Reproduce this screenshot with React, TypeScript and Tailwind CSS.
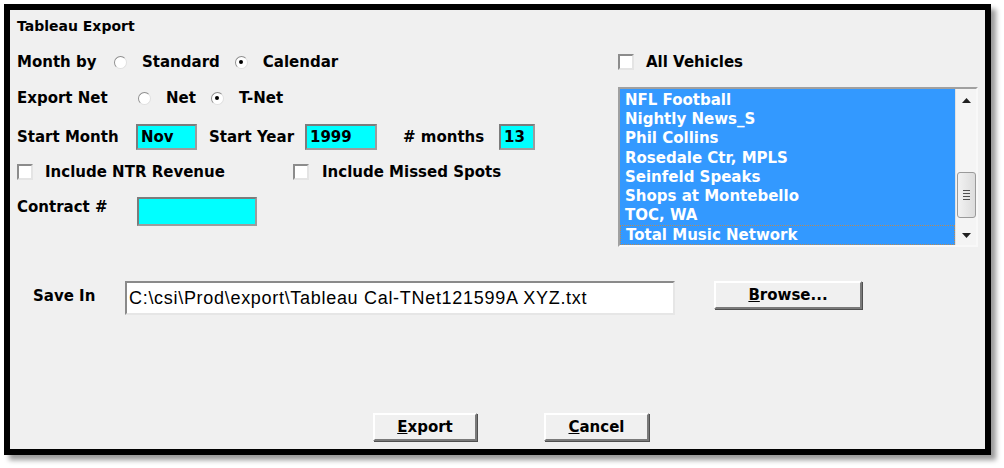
import React from "react";

const font = { fontFamily: '"DejaVu Sans", "Liberation Sans", sans-serif' };

const Radio = ({ checked, label }: { checked?: boolean; label: string }) => (
  <div className="flex items-center">
    <div className="w-[13px] h-[13px] rounded-full border border-t-[#8e8e8e] border-l-[#8e8e8e] border-b-[#e0e0e0] border-r-[#e0e0e0] bg-white flex items-center justify-center">
      {checked && <div className="w-[4px] h-[4px] rounded-full bg-black" />}
    </div>
    <span className="ml-[15px]">{label}</span>
  </div>
);

const Check = () => (
  <div className="w-[16px] h-[16px] bg-white border-2 border-t-[#8c8c8c] border-l-[#8c8c8c] border-b-[#e4e4e4] border-r-[#e4e4e4]" />
);

const CyanBox = ({ w, h, value }: { w: string; h: string; value?: string }) => (
  <div
    className={`${w} ${h} bg-[#00ffff] border-2 border-t-[#7c7c7c] border-l-[#7c7c7c] border-b-[#9c9c9c] border-r-[#9c9c9c] flex items-center pl-[3px]`}
  >
    {value}
  </div>
);

const Button = ({ w, children }: { w: string; children: React.ReactNode }) => (
  <div
    className={`${w} h-[28px] bg-[#f0f0f0] border-2 border-t-white border-l-white border-b-[#7a7a7a] border-r-[#7a7a7a] shadow-[1px_1px_0_#505050] flex items-center justify-center`}
  >
    {children}
  </div>
);

const vehicles = [
  "NFL Football",
  "Nightly News_S",
  "Phil Collins",
  "Rosedale Ctr, MPLS",
  "Seinfeld Speaks",
  "Shops at Montebello",
  "TOC, WA",
  "Total Music Network",
];

export default function App() {
  return (
    <div className="w-[1004px] h-[468px] bg-white pt-[4px] pl-[4px]" style={font}>
      <div className="w-[987px] h-[451px] border-[6px] border-black bg-[#f0f0f0] shadow-[5px_5px_5px_rgba(0,0,0,0.4)] flex flex-col pl-[7px] pt-[8px] text-[15px] font-bold text-black">
        <div className="flex">
          {/* left column */}
          <div className="w-[601px] flex flex-col">
            <div className="h-[16px] leading-[16px] text-[14px]">Tableau Export</div>

            <div className="mt-[16px] h-[24px] flex items-center">
              <span className="w-[97px]">Month by</span>
              <Radio label="Standard" />
              <div className="ml-[15px]">
                <Radio checked label="Calendar" />
              </div>
            </div>

            <div className="mt-[12px] h-[24px] flex items-center">
              <span className="w-[121px]">Export Net</span>
              <Radio label="Net" />
              <div className="ml-[15px]">
                <Radio checked label="T-Net" />
              </div>
            </div>

            <div className="mt-[13px] h-[28px] flex items-center">
              <span className="w-[119px]">Start Month</span>
              <CyanBox w="w-[61px]" h="h-[26px]" value="Nov" />
              <span className="ml-[12px] w-[96px]">Start Year</span>
              <CyanBox w="w-[72px]" h="h-[26px]" value="1999" />
              <span className="ml-[26px] w-[96px]">
                # months
              </span>
              <CyanBox w="w-[36px]" h="h-[26px]" value="13" />
            </div>

            <div className="mt-[11px] h-[20px] flex items-center">
              <div className="w-[276px] flex items-center">
                <Check />
                <span className="ml-[12px]">Include NTR Revenue</span>
              </div>
              <Check />
              <span className="ml-[13px]">Include Missed Spots</span>
            </div>

            <div className="mt-[15px] h-[28px] flex items-start">
              <span className="w-[120px] leading-[18px] mt-[1px]">Contract #</span>
              <CyanBox w="w-[120px]" h="h-[29px]" />
            </div>
          </div>

          {/* right column */}
          <div className="flex flex-col pt-[32px]">
            <div className="h-[24px] flex items-center">
              <Check />
              <span className="ml-[12px]">All Vehicles</span>
            </div>
            <div className="mt-[13px] w-[360px] h-[160px] border-2 border-t-[#a0a0a0] border-l-[#a0a0a0] border-b-[#f8f8f8] border-r-[#f8f8f8] flex">
              <div className="w-[335px] h-full bg-[#3399ff] pt-[2px] text-white">
                {vehicles.map((v, i) => (
                  <div
                    key={v}
                    className={`h-[19.2px] leading-[19px] pl-[5px] ${
                      i === vehicles.length - 1 ? "border border-dotted border-[#b98a55] pl-[4px] leading-[17px]" : ""
                    }`}
                  >
                    {v}
                  </div>
                ))}
              </div>
              <div className="w-[21px] h-full bg-[#f4f4f4] border-l border-[#e2e2e2] flex flex-col items-center">
                <div className="h-[24px] flex items-center justify-center">
                  <svg width="9" height="5" viewBox="0 0 9 5">
                    <path d="M0 5 L4.5 0 L9 5 Z" fill="#202020" />
                  </svg>
                </div>
                <div className="mt-[59px] w-[19px] h-[47px] rounded-[3px] border border-[#9a9a9a] bg-gradient-to-r from-[#f2f2f2] to-[#dcdcdc] flex flex-col items-center justify-center gap-[2px]">
                  <div className="w-[7px] h-[1px] bg-[#505050]" />
                  <div className="w-[7px] h-[1px] bg-[#505050]" />
                  <div className="w-[7px] h-[1px] bg-[#505050]" />
                  <div className="w-[7px] h-[1px] bg-[#505050]" />
                </div>
                <div className="mt-[7px] h-[20px] flex items-center justify-center">
                  <svg width="9" height="5" viewBox="0 0 9 5">
                    <path d="M0 0 L9 0 L4.5 5 Z" fill="#202020" />
                  </svg>
                </div>
              </div>
            </div>
          </div>
        </div>

        {/* save row */}
        <div className="mt-[34px] flex items-start pl-[16px]">
          <span className="w-[92px] leading-[18px] mt-[6px]">Save In</span>
          <div
            className="w-[550px] h-[34px] bg-white border-2 border-t-[#8a8a8a] border-l-[#8a8a8a] border-b-[#e6e6e6] border-r-[#e6e6e6] flex items-center pl-[2px] font-normal text-[18px] tracking-[0.7px]"
            style={{ fontFamily: '"Liberation Sans", Arial, sans-serif' }}
          >
            C:\csi\Prod\export\Tableau Cal-TNet121599A XYZ.txt
          </div>
          <div className="ml-[39px]">
            <Button w="w-[148px]">
              <span>
                <u>B</u>rowse...
              </span>
            </Button>
          </div>
        </div>

        {/* buttons */}
        <div className="mt-[98px] flex pl-[356px]">
          <Button w="w-[104px]">
            <span>
              <u>E</u>xport
            </span>
          </Button>
          <div className="ml-[67px]">
            <Button w="w-[105px]">
              <span>
                <u>C</u>ancel
              </span>
            </Button>
          </div>
        </div>
      </div>
    </div>
  );
}
